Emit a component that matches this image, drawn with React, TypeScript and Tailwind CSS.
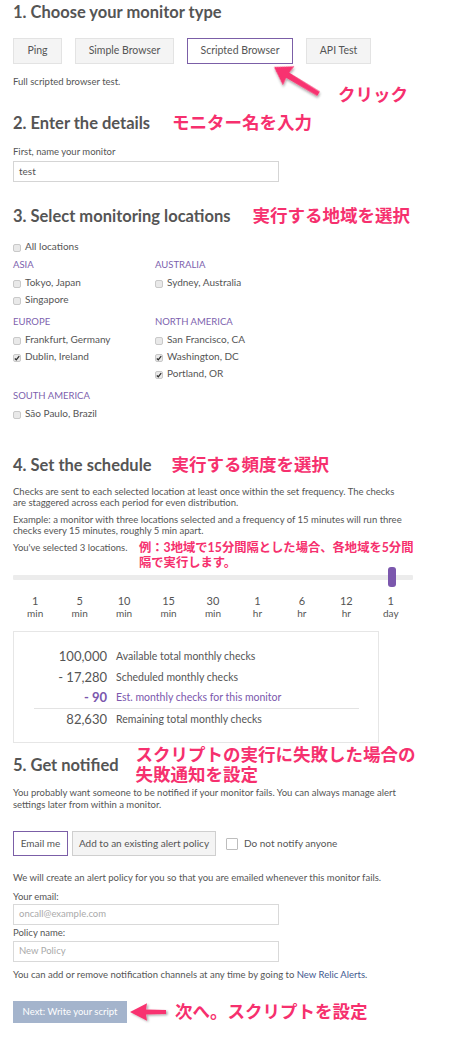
import React from "react";

const PINK = "text-[#f6306e]";

function Check({ checked }: { checked?: boolean }) {
  return (
    <span className="inline-flex items-center justify-center w-[8px] h-[8px] mt-[2px] rounded-[2px] border border-[#c9c9c9] bg-[#e9e9e9] shrink-0">
      {checked && (
        <svg width="6" height="6" viewBox="0 0 6 6">
          <path d="M0.8 3.4 L2.3 4.8 L5.2 1.2" stroke="#2f2f2f" strokeWidth="1.3" fill="none" />
        </svg>
      )}
    </span>
  );
}

function Loc({ label, checked }: { label: string; checked?: boolean }) {
  return (
    <div className="flex items-center gap-[4px] h-[17px] text-[10px] text-[#555]">
      <Check checked={checked} />
      <span>{label}</span>
    </div>
  );
}

function Region({ title, children }: { title: string; children: React.ReactNode }) {
  return (
    <div>
      <div className="h-[12px] leading-[12px] text-[9.5px] text-[#7d5fae] mb-[3px]">{title}</div>
      {children}
    </div>
  );
}

function Heading({ children, note, gap }: { children: React.ReactNode; note?: React.ReactNode; gap: string }) {
  return (
    <div className={`flex items-center ${gap}`}>
      <h2 className="text-[16.5px] font-bold leading-[24px] text-[#555] whitespace-nowrap">{children}</h2>
      {note && <div className={`${PINK} text-[17.5px] font-bold leading-[20px]`}>{note}</div>}
    </div>
  );
}

function Arrow({ className, angle, id, len }: { className: string; angle: number; id: string; len: number }) {
  const w = len + 6;
  return (
    <svg className={className} width={w} height="36" viewBox={`0 0 ${w} 36`} style={{ transform: `rotate(${angle}deg)`, transformOrigin: "4px 18px" }}>
      <defs>
        <filter id={id} x="-30%" y="-30%" width="160%" height="160%">
          <feDropShadow dx="1.5" dy="1.5" stdDeviation="1.2" floodColor="#000" floodOpacity="0.35" />
        </filter>
      </defs>
      <g filter={`url(#${id})`}>
        <path d={`M4 18 L21 7 L20 15 L${len} 15.5 L${len} 20.5 L20 21 L21 29 Z`} fill="#f8336f" />
      </g>
    </svg>
  );
}

const intervals: [string, string][] = [
  ["1", "min"], ["5", "min"], ["10", "min"], ["15", "min"], ["30", "min"],
  ["1", "hr"], ["6", "hr"], ["12", "hr"], ["1", "day"],
];

export default function App() {
  return (
    <div className="relative w-[464px] h-[1052px] bg-white pl-[13px] text-[#555] font-['Lato','Noto_Sans_CJK_JP',sans-serif] overflow-hidden">
      {/* Section 1 */}
      <h2 className="text-[16.5px] font-bold leading-[24px] text-[#555]">1. Choose your monitor type</h2>
      <div className="mt-[14px] flex gap-[13px] text-[10.5px]">
        <div className="w-[49px] h-[26px] flex items-center justify-center bg-[#f4f4f4] border border-[#e3e3e3]">Ping</div>
        <div className="w-[99px] h-[26px] flex items-center justify-center bg-[#f4f4f4] border border-[#e3e3e3]">Simple Browser</div>
        <div className="w-[106px] h-[26px] flex items-center justify-center bg-white border border-[#7b5ea7]">Scripted Browser</div>
        <div className="w-[65px] h-[26px] flex items-center justify-center bg-[#f4f4f4] border border-[#e3e3e3]">API Test</div>
      </div>
      <p className="mt-[12px] text-[9.5px] leading-[12px]">Full scripted browser test.</p>

      {/* Section 2 */}
      <div className="mt-[23px]">
        <Heading gap="gap-[22px]" note="モニター名を入力">2. Enter the details</Heading>
      </div>
      <p className="mt-[11px] text-[9.5px] leading-[12px]">First, name your monitor</p>
      <div className="mt-[3px] w-[266px] h-[21px] border border-[#d5d5d5] flex items-center pl-[5px] text-[10px] text-[#555]">test</div>

      {/* Section 3 */}
      <div className="mt-[22px]">
        <Heading gap="gap-[22px]" note="実行する地域を選択">3. Select monitoring locations</Heading>
      </div>
      <div className="mt-[10px]">
        <Loc label="All locations" />
      </div>
      <div className="mt-[4px] grid grid-cols-[142px_142px] gap-y-[8px]">
        <Region title="ASIA">
          <Loc label="Tokyo, Japan" />
          <Loc label="Singapore" />
        </Region>
        <Region title="AUSTRALIA">
          <Loc label="Sydney, Australia" />
        </Region>
        <Region title="EUROPE">
          <Loc label="Frankfurt, Germany" />
          <Loc label="Dublin, Ireland" checked />
        </Region>
        <Region title="NORTH AMERICA">
          <Loc label="San Francisco, CA" />
          <Loc label="Washington, DC" checked />
          <Loc label="Portland, OR" checked />
        </Region>
        <Region title="SOUTH AMERICA">
          <Loc label="São Paulo, Brazil" />
        </Region>
      </div>

      {/* Section 4 */}
      <div className="mt-[31px]">
        <Heading gap="gap-[20px]" note="実行する頻度を選択">4. Set the schedule</Heading>
      </div>
      <p className="mt-[9px] text-[9.5px] leading-[11px]">
        Checks are sent to each selected location at least once within the set frequency. The checks<br />
        are staggered across each period for even distribution.
      </p>
      <p className="mt-[6px] text-[9.5px] leading-[11px]">
        Example: a monitor with three locations selected and a frequency of 15 minutes will run three<br />
        checks every 15 minutes, roughly 5 min apart.
      </p>
      <p className="mt-[6px] text-[9.5px] leading-[11px]">You've selected 3 locations.</p>

      {/* slider */}
      <div className="relative mt-[14px] w-[400px] h-[20px] flex items-center">
        <div className="w-full h-[5px] bg-[#ececec] rounded-[1px]" />
        <div className="absolute left-[375px] top-0 w-[8px] h-[20px] rounded-[3px] bg-[#7b57ad]" />
      </div>
      <div className="mt-[8px] w-[400px] grid grid-cols-9 text-center text-[#555]">
        {intervals.map(([n, u], i) => (
          <div key={i} className="flex flex-col items-center">
            <span className="text-[11px] leading-[12px]">{n}</span>
            <span className="text-[10px] leading-[12px]">{u}</span>
          </div>
        ))}
      </div>

      {/* checks box */}
      <div className="mt-[12px] w-[366px] border border-[#e6e6e6] pt-[14px] pb-[12px] pl-[20px] pr-[19px]">
        <div className="flex items-center h-[21px]">
          <span className="w-[73px] text-right text-[13px]">100,000</span>
          <span className="ml-[9px] text-[10.5px]">Available total monthly checks</span>
        </div>
        <div className="flex items-center h-[21px]">
          <span className="w-[73px] text-right text-[13px]">- 17,280</span>
          <span className="ml-[9px] text-[10.5px]">Scheduled monthly checks</span>
        </div>
        <div className="flex items-center h-[21px] border-b border-[#e3e3e3] text-[#7b57ad]">
          <span className="w-[73px] text-right text-[13px] font-bold">- 90</span>
          <span className="ml-[9px] text-[10.5px]">Est. monthly checks for this monitor</span>
        </div>
        <div className="flex items-center h-[21px]">
          <span className="w-[73px] text-right text-[13px]">82,630</span>
          <span className="ml-[9px] text-[10.5px]">Remaining total monthly checks</span>
        </div>
      </div>

      {/* Section 5 */}
      <div className="mt-[2px]">
        <Heading gap="gap-[17px]" note={<>スクリプトの実行に失敗した場合の<br />失敗通知を設定</>}>5. Get notified</Heading>
      </div>
      <p className="mt-[2px] text-[9.5px] leading-[11.5px]">
        You probably want someone to be notified if your monitor fails. You can always manage alert<br />
        settings later from within a monitor.
      </p>
      <div className="mt-[21px] flex items-center text-[10px]">
        <div className="w-[55px] h-[25px] flex items-center justify-center border border-[#7b5ea7] bg-white">Email me</div>
        <div className="ml-[4px] w-[144px] h-[25px] flex items-center justify-center border border-[#cfcfcf] bg-[#f4f4f4]">Add to an existing alert policy</div>
        <span className="ml-[10px] w-[12px] h-[12px] border border-[#bdbdbd] bg-white rounded-[1px]" />
        <span className="ml-[6px]">Do not notify anyone</span>
      </div>
      <p className="mt-[16px] text-[9.5px] leading-[12px]">We will create an alert policy for you so that you are emailed whenever this monitor fails.</p>
      <p className="mt-[7px] text-[9.5px] leading-[12px]">Your email:</p>
      <div className="mt-[1px] w-[266px] h-[21px] border border-[#d9d9d9] flex items-center pl-[5px] text-[9.5px] text-[#aaa]">oncall@example.com</div>
      <p className="mt-[2px] text-[9.5px] leading-[12px]">Policy name:</p>
      <div className="mt-[2px] w-[266px] h-[21px] border border-[#d9d9d9] flex items-center pl-[5px] text-[9.5px] text-[#aaa]">New Policy</div>
      <p className="mt-[7px] text-[9.5px] leading-[12px]">
        You can add or remove notification channels at any time by going to <span className="text-[#3f5a8f]">New Relic Alerts</span>.
      </p>
      <div className="mt-[20px] flex items-center">
        <div className="w-[114px] h-[22px] flex items-center justify-center bg-[#a4b4cc] text-white text-[9.5px]">Next: Write your script</div>
        <div className="w-[48px]" />
        <div className={`${PINK} text-[17.5px] font-bold leading-[22px]`}>次へ。スクリプトを設定</div>
      </div>

      {/* annotation overlays */}
      <div className={`absolute left-[338px] top-[85px] ${PINK} text-[17.5px] font-bold leading-[20px]`}>クリック</div>
      <Arrow id="a1" len={56} className="absolute left-[270px] top-[49px]" angle={31} />
      <div className={`absolute left-[139px] top-[540px] ${PINK} text-[12.3px] font-bold leading-[15px]`}>
        例：3地域で15分間隔とした場合、各地域を5分間<br />隔で実行します。
      </div>
      <Arrow id="a2" len={40} className="absolute left-[126px] top-[994px] scale-y-[0.8]" angle={0} />
    </div>
  );
}
